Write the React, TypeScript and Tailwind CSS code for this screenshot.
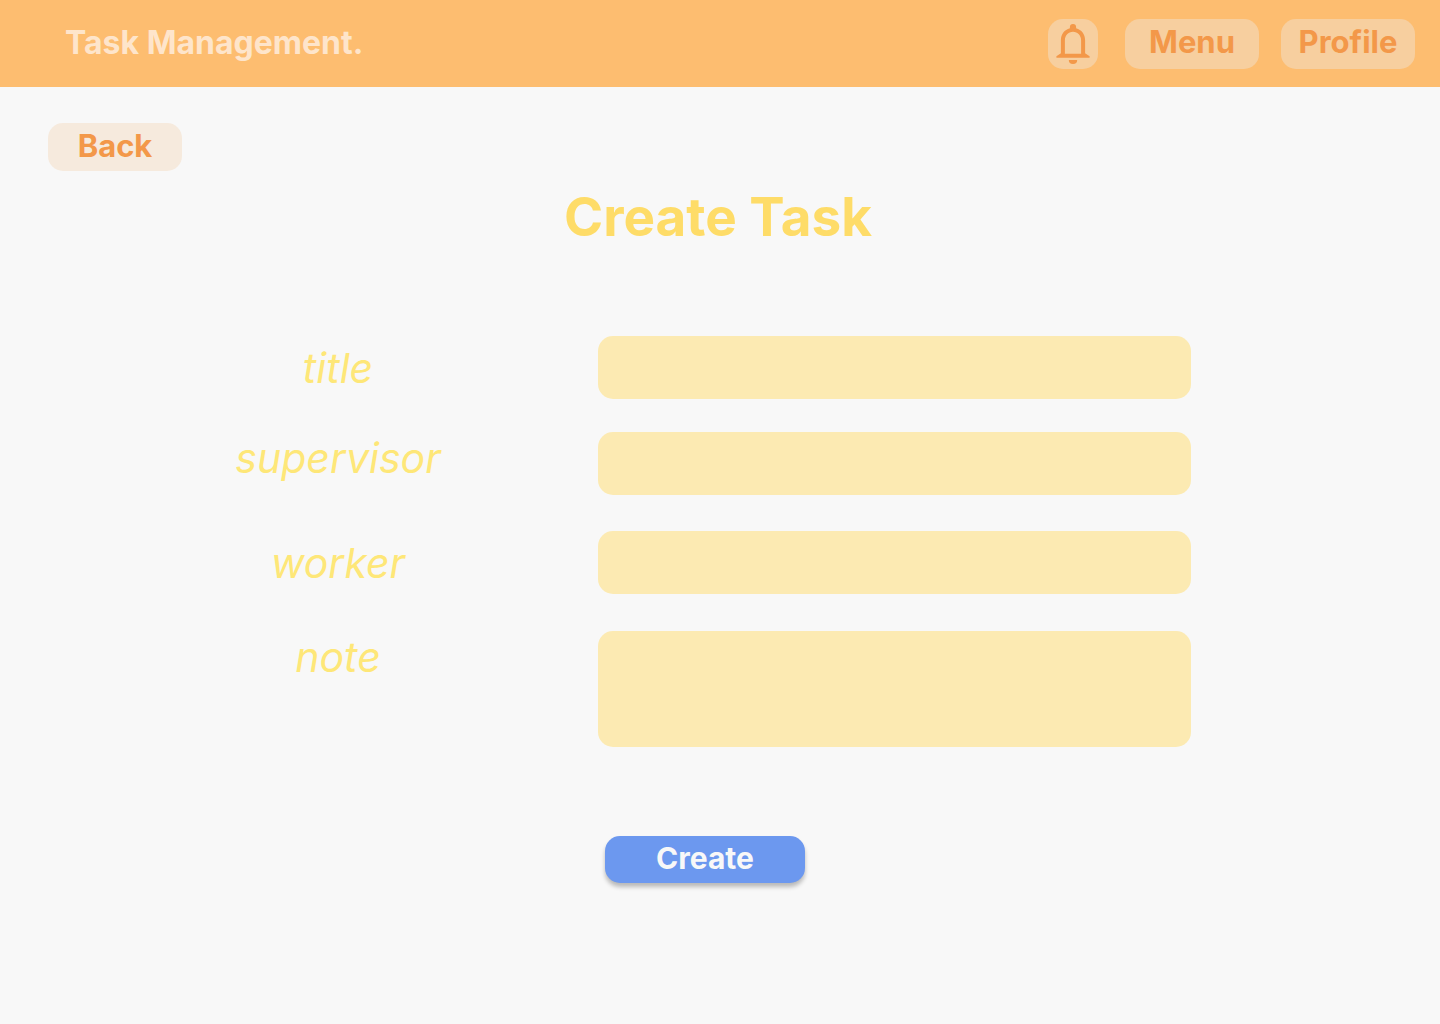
import React from "react";

type Field = {
  id: string;
  label: string;
  rowClass: string;
  labelClass: string;
  multiline?: boolean;
};

const fields: Field[] = [
  { id: "title", label: "title", rowClass: "", labelClass: "self-center" },
  { id: "supervisor", label: "supervisor", rowClass: "mt-[33px]", labelClass: "self-start" },
  { id: "worker", label: "worker", rowClass: "mt-9", labelClass: "self-center" },
  { id: "note", label: "note", rowClass: "mt-[37px]", labelClass: "self-start", multiline: true },
];

function BellIcon() {
  return (
    <svg viewBox="0 0 34 40" className="h-10 w-[34px]" fill="#f39849" aria-hidden="true">
      <path
        fillRule="evenodd"
        d="M17 0a3.100 3.100 0 0 1 3.100 3.100v1.200C25.600 5.700 29.100 10.400 29.100 16.200V29.200L33.600 32.200V33.800H.400V32.200L4.900 29.200V16.200C4.900 10.400 8.400 5.700 13.900 4.300V3.100A3.100 3.100 0 0 1 17 0ZM17 7.800C12.200 7.800 8.900 11.400 8.900 16.400V29.800H25.100V16.400C25.100 11.400 21.800 7.800 17 7.800Z"
      />
      <path d="M12.800 36h8.400a4.200 4 0 0 1-8.400 0Z" />
    </svg>
  );
}

function NavButton({ children }: { children: React.ReactNode }) {
  return (
    <button type="button" className="h-[50px] w-[134px] rounded-[15px] bg-[#f7cf9f] pb-1 text-[31px] leading-9 font-bold text-[#f39849]">
      {children}
    </button>
  );
}

export default function App() {
  return (
    <div className="min-h-screen bg-[#f8f8f8] font-['Inter',sans-serif]">
      <header className="flex items-center justify-between bg-[#fdbd70] pt-[19px] pr-[25px] pb-[18px] pl-[65px]">
        <p className="pb-0.5 text-[32px] leading-9 font-bold text-[#fee5cb]">Task Management.</p>
        <nav className="flex items-center gap-[22px]">
          <button
            type="button"
            aria-label="Notifications"
            className="mr-[5px] flex size-[50px] items-center justify-center rounded-[15px] bg-[#f7cf9f]"
          >
            <BellIcon />
          </button>
          <NavButton>Menu</NavButton>
          <NavButton>Profile</NavButton>
        </nav>
      </header>

      <main className="pt-9">
        <button
          type="button"
          className="ml-12 block h-12 w-[134px] rounded-[15px] bg-[#f6eadd] pb-0.5 text-[31px] leading-9 font-bold text-[#f39849]"
        >
          Back
        </button>

        <h1 className="mt-4 pr-1 text-center text-[53px] leading-[60px] font-bold text-[#fedc68]">Create Task</h1>

        <form className="mt-[89px]" onSubmit={(e) => e.preventDefault()}>
          <div className="pr-[249px] pl-[78px]">
            {fields.map((field) => (
              <div key={field.id} className={`grid grid-cols-[520fr_593fr] ${field.rowClass}`}>
                <label
                  htmlFor={field.id}
                  className={`text-center text-[41px] leading-[52px] font-normal text-[#fee778] italic ${field.labelClass}`}
                >
                  {field.label}
                </label>
                {field.multiline ? (
                  <textarea
                    id={field.id}
                    className="block h-[116px] w-full resize-none rounded-[15px] bg-[#fceab2] px-5 py-3 text-2xl outline-none"
                  />
                ) : (
                  <input
                    id={field.id}
                    type="text"
                    className="block h-[63px] w-full rounded-[15px] bg-[#fceab2] px-5 text-2xl outline-none"
                  />
                )}
              </div>
            ))}
          </div>
          <div className="mt-[89px] flex justify-center pr-[30px]">
            <button
              type="submit"
              className="h-[47px] w-[200px] rounded-[15px] bg-[#6c98ef] pb-1 text-3xl font-bold text-[#f8f8f8] shadow-[0_4px_4px_rgba(0,0,0,0.25)]"
            >
              Create
            </button>
          </div>
        </form>
      </main>
    </div>
  );
}
